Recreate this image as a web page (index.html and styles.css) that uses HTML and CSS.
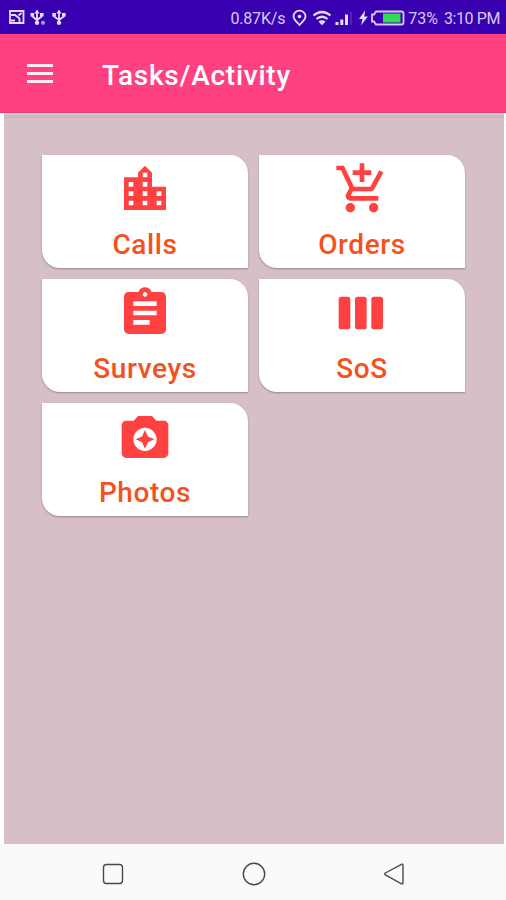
FILE: index.html
```html
<!DOCTYPE html>
<html lang="en">
  <head>
    <meta charset="UTF-8" />
    <meta name="viewport" content="width=device-width, initial-scale=1.0" />
    <title>Tasks/Activity</title>
    <link rel="stylesheet" href="styles.css">
  </head>

  <body>
    <div class="statusbar">
      <svg class="status-left" width="60" height="18" viewBox="0 0 60 18">
        <path class="line" d="M3 3h13.500v12H3zM4 7h4l4.500 3.500V14M11.500 7.500l3-2.500M4 12.500h4" />
        <g class="line">
          <path d="M30 4v11M25.500 6v2.500l4.500 3.500 4.500-3.500V6" />
          <path d="M52 4v11M47.200 6v2.500l4.800 3.500 4.800-3.500V6" />
        </g>
        <path class="fill" d="M30 1.500l2.600 4h-5.200zM52 1.500l2.600 4h-5.200zM23.500 5h3.600v3.500h-3.600zM33 5h3.600v3.500H33zM45.300 5h3.600v3.500h-3.600zM55 5h3.600v3.500H55z" />
        <circle class="fill" cx="30" cy="14.800" r="2.200" />
        <circle class="fill" cx="52" cy="14.800" r="2.200" />
        <circle class="dot" cx="36" cy="14.800" r="2.100" />
      </svg>
      <div class="status-right">
        <span class="speed">0.87K/s</span>
        <svg class="signals" width="114" height="20" viewBox="0 0 114 20">
          <path class="line" d="M7.500 17C4.500 13.500 1.500 11.500 1.500 8.200a6 5.500 0 0 1 12 0c0 3.300-3 5.300-6 8.800z" />
          <circle class="fill" cx="7.500" cy="8.500" r="1.800" />
          <path class="line wifi" d="M21.500 7.500q8.500-7 17 0M24.500 11q5.500-4.500 11 0" />
          <path class="fill" d="M26.500 13.500q3.500-2.600 7 0L30 17.300z" />
          <path class="fill" d="M43.500 14h3v3h-3zM48.300 11.500h3V17h-3zM53 6.500h3V17h-3z" />
          <path class="dim" d="M58.500 4h1v13h-1z" />
          <path class="fill" d="M73 2.500L67 11h3.500L69 17.500l6.800-9h-3.500z" />
          <path class="line battery" d="M84 3.500h25.500a2 2 0 0 1 2 2v9a2 2 0 0 1-2 2H84l-2-3h-2v-7h2z" />
          <path class="charge" d="M91 5.500h17.500v9H91z" />
        </svg>
        <span class="percent">73%</span>
        <span class="time">3:10 PM</span>
      </div>
    </div>

    <header class="toolbar">
      <button class="menu-btn" aria-label="Menu">
        <span></span>
        <span></span>
        <span></span>
      </button>
      <h1>Tasks/Activity</h1>
    </header>

    <main class="content">
      <div class="cards">
        <div class="card">
          <svg viewBox="0 0 24 24"><path d="M15 11V5l-3-3-3 3v2H3v14h18V11h-6zm-8 8H5v-2h2v2zm0-4H5v-2h2v2zm0-4H5V9h2v2zm6 8h-2v-2h2v2zm0-4h-2v-2h2v2zm0-4h-2V9h2v2zm0-4h-2V5h2v2zm6 12h-2v-2h2v2zm0-4h-2v-2h2v2z" /></svg>
          <p>Calls</p>
        </div>
        <div class="card">
          <svg viewBox="0 0 24 24"><path d="M11 9h2V6h3V4h-3V1h-2v3H8v2h3v3zm-4 9c-1.1 0-1.99.9-1.99 2S5.9 22 7 22s2-.9 2-2-.9-2-2-2zm10 0c-1.1 0-1.99.9-1.99 2s.89 2 1.99 2 2-.9 2-2-.9-2-2-2zm-9.83-3.25l.03-.12.9-1.63h7.45c.75 0 1.41-.41 1.75-1.03l3.86-7.01L19.42 4h-.01l-1.1 2-2.76 5H8.53l-.13-.27L6.16 6l-.95-2-.94-2H1v2h2l3.6 7.590-1.350 2.450c-.16.28-.25.61-.25.96 0 1.100.9 2 2 2h12v-2H7.420c-.13 0-.25-.11-.25-.25z" /></svg>
          <p>Orders</p>
        </div>
        <div class="card">
          <svg viewBox="0 0 24 24"><path d="M19 3h-4.180C14.400 1.840 13.300 1 12 1c-1.300 0-2.400.84-2.820 2H5c-1.100 0-2 .9-2 2v14c0 1.100.9 2 2 2h14c1.100 0 2-.9 2-2V5c0-1.100-.9-2-2-2zm-7 0c.55 0 1 .45 1 1s-.45 1-1 1-1-.45-1-1 .45-1 1-1zm2 14H7v-2h7v2zm3-4H7v-2h10v2zm0-4H7V7h10v2z" /></svg>
          <p>Surveys</p>
        </div>
        <div class="card">
          <svg viewBox="0 0 24 24"><path d="M6 5H3c-.55 0-1 .45-1 1v12c0 .55.45 1 1 1h3c.55 0 1-.45 1-1V6c0-.55-.45-1-1-1zm14 0h-3c-.55 0-1 .45-1 1v12c0 .55.45 1 1 1h3c.55 0 1-.45 1-1V6c0-.55-.45-1-1-1zm-7 0h-3c-.55 0-1 .45-1 1v12c0 .55.45 1 1 1h3c.55 0 1-.45 1-1V6c0-.55-.45-1-1-1z" /></svg>
          <p>SoS</p>
        </div>
        <div class="card">
          <svg viewBox="0 0 24 24"><path d="M9 3L7.170 5H4c-1.100 0-2 .9-2 2v12c0 1.100.9 2 2 2h16c1.100 0 2-.9 2-2V7c0-1.100-.9-2-2-2h-3.170L15 3H9zm3 15c-2.760 0-5-2.240-5-5s2.240-5 5-5 5 2.240 5 5-2.240 5-5 5zm0-1l1.250-2.750L16 13l-2.750-1.250L12 9l-1.250 2.750L8 13l2.750 1.250z" /></svg>
          <p>Photos</p>
        </div>
      </div>
    </main>

    <nav class="navbar">
      <svg viewBox="0 0 24 24"><rect x="2.500" y="2.500" width="19" height="19" rx="3" /></svg>
      <svg viewBox="0 0 24 24"><circle cx="12" cy="12" r="10.700" /></svg>
      <svg viewBox="0 0 24 24"><path d="M19.500 2.300L3.400 11a1 1 0 0 0 0 1.800l16.100 9q1.500.5 1.500-1V3.200q0-1.500-1.500-.9z" /></svg>
    </nav>
  </body>
</html>
```
FILE: styles.css
```css
* {
  margin: 0;
  padding: 0;
  box-sizing: border-box;
}

body {
  display: flex;
  flex-direction: column;
  height: 100vh;
  overflow: hidden;
  font-family: Roboto, "Liberation Sans", sans-serif;
  background: #fff;
}

/* status bar */
.statusbar {
  display: flex;
  justify-content: space-between;
  height: 34px;
  padding: 0 6px 0 7px;
  background: #3800b0;
  color: #d8caf5;
  font-size: 16px;
  line-height: 37px;
}

.status-left {
  margin-top: 8px;
}

.status-right {
  display: flex;
  white-space: nowrap;
}

.speed {
  letter-spacing: -0.2px;
}

.signals {
  margin: 8px 0 0 7px;
}

.percent {
  margin-left: 2px;
}

.time {
  margin-left: 6px;
  letter-spacing: -0.4px;
}

.line {
  fill: none;
  stroke: #e6dcfa;
  stroke-width: 1.8;
}

.wifi {
  stroke-width: 2.2;
}

.battery {
  stroke: #d8caf5;
}

.fill {
  fill: #e6dcfa;
}

.dim {
  fill: #6a45c8;
}

.dot {
  fill: #a893e0;
}

.charge {
  fill: #35d958;
}

/* toolbar */
.toolbar {
  display: flex;
  align-items: center;
  height: 79px;
  padding-left: 27px;
  background: #ff4081;
  color: #fff;
  border-bottom: 1px solid #e23d75;
}

.menu-btn {
  display: flex;
  flex-direction: column;
  gap: 5px;
  width: 26px;
  margin-right: 49px;
  border: none;
  background: none;
}

.menu-btn span {
  height: 3px;
  background: #ffe9f1;
}

.toolbar h1 {
  padding-top: 4px;
  font-size: 28px;
  font-weight: 500;
  letter-spacing: 0.75px;
}

/* content */
.content {
  flex: 1;
  margin: 0 2px 0 4px;
  padding: 42px 38px;
  background: linear-gradient(#d9d5d6, #c9b6bb 3px, #d6bfc5 6px);
}

.cards {
  display: grid;
  grid-template-columns: 206px 206px;
  grid-auto-rows: 113px;
  gap: 11px;
}

.card {
  display: flex;
  flex-direction: column;
  align-items: center;
  padding-top: 6px;
  border-radius: 0 18px 0 18px;
  background: #fff;
  box-shadow: 0 1px 2px rgba(0, 0, 0, 0.3);
}

.card svg {
  flex-shrink: 0;
  width: 56px;
  height: 56px;
  fill: #ff4141;
}

.card p {
  color: #f4511e;
  font-size: 28px;
  font-weight: 500;
  line-height: 55px;
  letter-spacing: 0.6px;
}

/* system navigation */
.navbar {
  display: flex;
  align-items: center;
  justify-content: space-between;
  height: 56px;
  padding: 4px 100px 0 101px;
  background: #fafafa;
}

.navbar svg {
  width: 24px;
  height: 24px;
  fill: none;
  stroke: #4a4a4a;
  stroke-width: 1.4;
}
```
